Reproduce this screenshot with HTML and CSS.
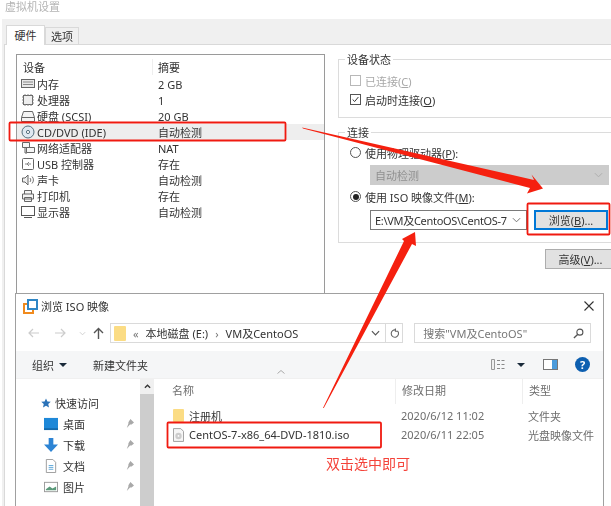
FILE: index.html
```html
<!DOCTYPE html>
<html lang="zh">
<head>
<meta charset="utf-8">
<title>虚拟机设置</title>
<link rel="stylesheet" href="styles.css">
</head>
<body>
<div class="stage">
  <div class="title">虚拟机设置</div>
  <div class="window">
    <div class="tabs"><span class="tab active">硬件</span><span class="tab">选项</span></div>
    <div class="panel">
      <div class="list">
        <div class="row head"><span class="c1 plain">设备</span><span class="c2">摘要</span></div>
        <div class="row"><span class="c1"><svg class="ic" viewBox="0 0 14 14"><rect x=".5" y="2.5" width="13" height="8" fill="#e8e8e8" stroke="#666"/><path d="M2 5h10M2 7.5h10" stroke="#888"/></svg>内存</span><span class="c2">2 GB</span></div>
        <div class="row"><span class="c1"><svg class="ic" viewBox="0 0 14 14"><rect x="2.5" y="2.5" width="9" height="9" fill="#eee" stroke="#666"/><path d="M4 1v12M7 1v12M10 1v12M1 4h12M1 7h12M1 10h12" stroke="#888" stroke-dasharray="1.5 8.5 2 0"/></svg>处理器</span><span class="c2">1</span></div>
        <div class="row"><span class="c1"><svg class="ic" viewBox="0 0 14 14"><path d="M.5 12.5v-4l2-6h9l2 6v4zM.5 8.500h13" fill="#f4f4f4" stroke="#666"/></svg>硬盘 (SCSI)</span><span class="c2">20 GB</span></div>
        <div class="row sel"><span class="c1"><svg class="ic" viewBox="0 0 14 14"><circle cx="7" cy="7" r="6" fill="#dfe9f2" stroke="#55707f"/><circle cx="7" cy="7" r="1.6" fill="#fff" stroke="#55707f"/></svg>CD/DVD (IDE)</span><span class="c2">自动检测</span></div>
        <div class="row"><span class="c1"><svg class="ic" viewBox="0 0 14 14"><path d="M1.500 1.500h7v5h-7zM5.500 6.500h8v5h-8zM4 7v5h2" fill="#f5f5f5" stroke="#666"/></svg>网络适配器</span><span class="c2">NAT</span></div>
        <div class="row"><span class="c1"><svg class="ic" viewBox="0 0 14 14"><rect x="1.500" y="1.500" width="11" height="11" rx="1" fill="#fff" stroke="#666"/><path d="M4 7h6M6 7l2-2M6 7l2 2" stroke="#888" fill="none"/></svg>USB 控制器</span><span class="c2">存在</span></div>
        <div class="row"><span class="c1"><svg class="ic" viewBox="0 0 14 14"><path d="M1.500 5h2.500l3-3v10l-3-3H1.500z" fill="#eee" stroke="#666"/><path d="M9 5a3 3 0 0 1 0 4M11 3.500a5 5 0 0 1 0 7" stroke="#777" fill="none"/></svg>声卡</span><span class="c2">自动检测</span></div>
        <div class="row"><span class="c1"><svg class="ic" viewBox="0 0 14 14"><path d="M3.500 5V1.500h7V5M1.500 5h11v5h-11zM3.500 8.500h7v4h-7z" fill="#f4f4f4" stroke="#666"/></svg>打印机</span><span class="c2">存在</span></div>
        <div class="row"><span class="c1"><svg class="ic" viewBox="0 0 14 14"><rect x=".5" y="1.500" width="13" height="9" fill="#fff" stroke="#555"/><path d="M3 12.500h8" stroke="#555"/></svg>显示器</span><span class="c2">自动检测</span></div>
      </div>
      <div class="side">
        <fieldset class="group status">
          <legend>设备状态</legend>
          <label class="opt off"><i class="check"></i><span>已连接(<u>C</u>)</span></label>
          <label class="opt"><i class="check on"><svg viewBox="0 0 11 11"><path d="M2 5.500l2.500 2.500 4.500-5.500" fill="none" stroke="#333" stroke-width="1.200"/></svg></i><span>启动时连接(<u>O</u>)</span></label>
        </fieldset>
        <fieldset class="group conn">
          <legend>连接</legend>
          <label class="opt"><i class="radio"></i><span>使用物理驱动器(<u>P</u>):</span></label>
          <div class="combo off"><span>自动检测</span><svg class="chev" viewBox="0 0 10 6"><path d="M1 1l4 4 4-4" fill="none" stroke="#aaa"/></svg></div>
          <label class="opt iso"><i class="radio on"></i><span>使用 ISO 映像文件(<u>M</u>):</span></label>
          <div class="pick">
            <div class="combo path"><span>E:\VM及CentoOS\CentOS-7</span><svg class="chev" viewBox="0 0 10 6"><path d="M1 1l4 4 4-4" fill="none" stroke="#666"/></svg></div>
            <button class="btn browse">浏览(<u>B</u>)...</button>
          </div>
        </fieldset>
        <div class="advanced"><button class="btn">高级(<u>V</u>)...</button></div>
      </div>
    </div>
  </div>

  <section class="dialog">
    <div class="dtitle">
      <svg class="logo" viewBox="0 0 15 15"><rect x="1" y="5" width="9" height="9" fill="none" stroke="#f08a1d" stroke-width="2"/><rect x="5" y="1" width="9" height="9" fill="#fff" stroke="#2f86c5" stroke-width="2"/></svg>
      <span class="dname">浏览 ISO 映像</span>
      <svg class="close" viewBox="0 0 10 10"><path d="M.5.5l9 9M9.500.5l-9 9" stroke="#333" stroke-width="1.100"/></svg>
    </div>
    <div class="nav">
      <svg class="arrow" viewBox="0 0 12 10"><path d="M11 5H1M5 1L1 5l4 4" fill="none" stroke="#ccc" stroke-width="1.200"/></svg>
      <svg class="arrow" viewBox="0 0 12 10"><path d="M1 5h10M7 1l4 4-4 4" fill="none" stroke="#ccc" stroke-width="1.200"/></svg>
      <svg class="mini" viewBox="0 0 8 5"><path d="M1 1l3 3 3-3" fill="none" stroke="#ccc"/></svg>
      <svg class="up" viewBox="0 0 11 12"><path d="M5.500 12V1.500M1 6l4.500-4.500L10 6" fill="none" stroke="#555" stroke-width="1.400"/></svg>
      <div class="addr">
        <i class="folder"></i><span class="crumb dim">«</span><span class="crumb">本地磁盘 (E:)</span><span class="crumb dim">›</span><span class="crumb">VM及CentoOS</span>
        <svg class="addr-chev" viewBox="0 0 10 6"><path d="M1 1l4 4 4-4" fill="none" stroke="#555" stroke-width="1.300"/></svg>
        <span class="refresh"><svg viewBox="0 0 12 12"><path d="M9.500 3.500a4 4 0 1 1-2-1.300M7 .5v3h3" fill="none" stroke="#666" stroke-width="1.200"/></svg></span>
      </div>
      <div class="search"><span>搜索"VM及CentoOS"</span><svg viewBox="0 0 12 12"><circle cx="7.500" cy="4.500" r="3.300" fill="none" stroke="#555" stroke-width="1.200"/><path d="M5 7l-4 4" stroke="#555" stroke-width="1.500"/></svg></div>
    </div>
    <div class="tools">
      <span class="tool">组织<i class="caret"></i></span><span class="tool">新建文件夹</span>
      <span class="tool-icons">
        <svg class="views" viewBox="0 0 15 11"><path d="M.5.500h3v10h-3z" fill="#eee" stroke="#999"/><path d="M6 1.500h3M10.500 1.500h3M6 5.500h3M10.500 5.500h3M6 9.500h3M10.500 9.500h3" stroke="#888"/></svg>
        <i class="caret vcaret"></i>
        <svg class="pane" viewBox="0 0 15 11"><rect x=".5" y=".5" width="14" height="10" fill="#fff" stroke="#777"/><rect x="9" y="1" width="5" height="9" fill="#4a9bdb"/></svg>
        <span class="help">?</span>
      </span>
    </div>
    <div class="content">
      <aside class="tree">
        <div class="tree-list">
          <div class="tree-item quick"><svg class="t-ic star" viewBox="0 0 12 12"><path d="M6 .5l1.700 3.700 4 .4-3 2.700.9 4L6 9.300l-3.600 2 .9-4-3-2.700 4-.4z" fill="#2a72b8"/></svg>快速访问</div>
          <div class="tree-item"><svg class="t-ic" viewBox="0 0 15 13"><rect width="15" height="12" fill="#1e88d8"/><rect y="11" width="15" height="2" fill="#156aac"/></svg>桌面<i class="pin"></i></div>
          <div class="tree-item"><svg class="t-ic" viewBox="0 0 15 15"><path d="M5 0h5v7h5l-7.500 8L0 7h5z" fill="#2d84d4"/></svg>下载<i class="pin"></i></div>
          <div class="tree-item"><svg class="t-ic" viewBox="0 0 15 15"><path d="M2.500.5h7l3 3v11h-10z" fill="#fff" stroke="#999"/><path d="M5 7h5M5 9h5M5 11h5" stroke="#5aa6d8"/></svg>文档<i class="pin"></i></div>
          <div class="tree-item"><svg class="t-ic" viewBox="0 0 15 13"><rect x=".5" y="1.500" width="14" height="10" fill="#fff" stroke="#999"/><path d="M2 9l4-3 3 2 4-2v4H2z" fill="#5b9a7a"/></svg>图片<i class="pin"></i></div>
        </div>
        <div class="scroll"><span class="sup"><svg viewBox="0 0 8 5"><path d="M1 4l3-3 3 3" fill="none" stroke="#333" stroke-width="1.500"/></svg></span><span class="thumb"></span></div>
      </aside>
      <div class="files">
        <div class="fhead">
          <span class="fc name">名称<svg class="sort" viewBox="0 0 8 4"><path d="M.5 3.500L4 .5l3.500 3" fill="none" stroke="#aaa"/></svg></span><span class="fc date">修改日期</span><span class="fc type">类型</span>
        </div>
        <div class="frow"><span class="fc name strong"><i class="folder small"></i>注册机</span><span class="fc date">2020/6/12 11:02</span><span class="fc type">文件夹</span></div>
        <div class="frow"><span class="fc name strong"><svg class="disc" viewBox="0 0 12 15"><path d="M.5.500h8l3 3v11H.5z" fill="#f6f6f6" stroke="#999"/><circle cx="6" cy="8.500" r="3.500" fill="#ccc"/><circle cx="6" cy="8.500" r="1" fill="#fff"/></svg>CentOS-7-x86_64-DVD-1810.iso</span><span class="fc date">2020/6/11 22:05</span><span class="fc type">光盘映像文件</span></div>
        <p class="note">双击选中即可</p>
      </div>
    </div>
  </section>

  <svg class="marks" viewBox="0 0 611 506">
    <rect class="box" x="9.500" y="122.500" width="276" height="18" rx="1"/>
    <rect class="box" x="527.500" y="203.500" width="82" height="31" rx="1"/>
    <rect class="box" x="167.500" y="422.500" width="213.500" height="25" rx="1"/>
    <path class="arr" d="M302 127.500L534 180L531.500 174.500L543 188.500L527 193.500L530 188L303 128.500Z"/>
    <path class="arr" d="M323 408L404 241L402 239L415 232L416 246L412 244L323.800 408Z"/>
  </svg>
</div>
</body>
</html>
```

FILE: styles.css
```css
* { box-sizing: border-box; }
html, body { margin: 0; background: #fff; }
body { font-family: "Noto Sans", "Noto Sans CJK SC", sans-serif; font-size: 11px; color: #333; }
button { font: inherit; color: inherit; padding: 0; }
i { display: block; }
u { text-decoration: underline; }
svg { display: block; flex: none; }

.stage { position: relative; width: 611px; height: 506px; overflow: hidden; filter: blur(.4px); }
.title { height: 19px; padding: 0 0 0 5px; font-size: 11px; line-height: 13px; color: #b4b4b4; }

.window { height: 487px; margin-left: 2px; background: #f0f0f0; padding: 6px 0 0 1px; }
.tabs { display: flex; align-items: flex-end; height: 19px; padding-left: 3px; }
.tab { display: block; width: 34px; height: 17px; line-height: 17px; text-align: center; background: #f0f0f0; border: 1px solid #d9d9d9; border-bottom: 0; font-size: 11px; }
.tab.active { width: 39px; height: 20px; line-height: 19px; background: #fff; border-color: #d9d9d9; position: relative; z-index: 1; margin-bottom: -1px; }
.panel { display: flex; align-items: flex-start; gap: 13px; height: 462px; margin-left: 1px; background: #fff; border-top: 1px solid #d9d9d9; border-left: 1px solid #d9d9d9; padding: 9px 0 0 11px; }

.list { width: 309px; height: 240px; background: #fff; border: 1px solid #9a9a9a; padding-top: 3px; flex: none; }
.row { display: flex; align-items: center; height: 15.950px; white-space: nowrap; font-size: 11px; }
.row.head { height: 18.500px; padding-bottom: 1px; }
.row.sel { background: #eee; }
.c1 { display: flex; align-items: center; gap: 2px; width: 141px; padding-left: 4px; }
.c1.plain { padding-left: 6px; }
.c2 { padding-left: 0; }
.head .c2 { border-left: 1px solid #eee; padding-left: 5px; margin-left: -6px; }
.ic { width: 14px; height: 14px; }

.side { flex: 1; min-width: 0; }
.group { margin: 0; width: 291px; border: 1px solid #dcdcdc; border-right: 0; padding: 0 0 0 11px; min-width: 0; }
.group legend { margin-left: -5px; padding: 0 2px; font-size: 11px; line-height: 13px; }
.status { height: 65px; margin-top: -1px; padding-top: 5px; }
.conn { height: 117px; margin-top: 8px; padding-top: 4px; }
.opt { display: flex; align-items: center; gap: 4px; height: 19px; font-size: 11px; white-space: nowrap; }
.opt.off { color: #a8a8a8; }
.check { width: 11px; height: 11px; border: 1px solid #b8b8b8; background: #fff; }
.check.on { border-color: #555; }
.check svg { width: 9px; height: 9px; }
.radio { position: relative; width: 11px; height: 11px; border: 1px solid #555; border-radius: 50%; background: #fff; }
.radio.on::after { content: ""; position: absolute; inset: 1.500px; border-radius: 50%; background: #222; }
.combo { display: flex; align-items: center; justify-content: space-between; height: 20px; border: 1px solid #aaa; background: #fff; padding: 0 5px 0 4px; font-size: 11px; white-space: nowrap; }
.combo.off { width: 239px; margin: 3px 0 2px 20px; background: #ccc; border-color: #ccc; color: #909090; }
.combo.path { width: 157px; border-color: #7a7a7a; letter-spacing: -.3px; }
.chev { width: 9px; height: 6px; }
.pick { display: flex; align-items: center; gap: 7px; margin: 4px 0 0 20px; }
.btn { height: 20px; background: #e1e1e1; border: 1px solid #adadad; font-size: 11px; white-space: nowrap; }
.browse { width: 74px; border: 2px solid #0078d7; }
.advanced { margin: 6px 0 0 207px; }
.advanced .btn { width: 70px; border-right: 0; }

.dialog { position: absolute; left: 15px; top: 293px; width: 589px; height: 220px; background: #fff; border: 1px solid #a0a0a0; }
.dtitle { display: flex; align-items: center; height: 24px; padding: 0 9px 0 7px; gap: 3px; }
.logo { width: 15px; height: 15px; }
.dname { font-size: 11px; color: #333; }
.close { width: 10px; height: 10px; margin-left: auto; }

.nav { display: flex; align-items: center; height: 33px; padding: 0 12px 3px 12px; }
.arrow { width: 12px; height: 10px; margin-right: 14px; }
.mini { width: 7px; height: 5px; margin: 0 7px 0 -1px; }
.up { width: 11px; height: 12px; margin-right: 6px; }
.addr { display: flex; align-items: center; width: 294px; height: 20px; border: 1px solid #dadada; padding-left: 3px; font-size: 11px; white-space: nowrap; }
.folder { width: 12px; height: 15px; background: #fbdc84; border-radius: 1px; }
.folder.small { height: 13px; width: 11px; margin-right: 5px; }
.crumb { margin-left: 7px; }
.crumb.dim { color: #777; }
.addr-chev { width: 9px; height: 6px; margin-left: auto; margin-right: 5px; }
.refresh { display: flex; align-items: center; justify-content: center; width: 17px; height: 18px; border-left: 1px solid #dadada; }
.refresh svg { width: 11px; height: 11px; }
.search { display: flex; align-items: center; justify-content: space-between; width: 177px; height: 20px; margin-left: 11px; border: 1px solid #dadada; padding: 0 6px 0 8px; color: #777; font-size: 11px; white-space: nowrap; }
.search svg { width: 11px; height: 11px; }

.tools { display: flex; align-items: center; gap: 26px; height: 28px; padding: 0 13px 0 16px; background: #f5f6f7; border-bottom: 1px solid #f0f0f0; font-size: 11px; }
.tool { display: flex; align-items: center; }
.caret { width: 0; height: 0; margin-left: 5px; border: 4px solid transparent; border-top: 4px solid #1a2a3a; border-bottom: 0; }
.tool-icons { display: flex; align-items: center; margin-left: auto; }
.views { width: 15px; height: 11px; margin-right: 6px; }
.vcaret { margin: 0 18px 0 5px; }
.pane { width: 15px; height: 11px; margin-right: 17px; }
.help { width: 15px; height: 15px; border-radius: 50%; background: #0d5fb0; color: #fff; font-size: 11px; font-weight: 700; line-height: 15px; text-align: center; }

.content { display: flex; }
.tree { display: flex; width: 138px; height: 130px; }
.tree-list { width: 124px; padding: 13px 0 0 0; font-size: 11px; }
.tree-item { display: flex; align-items: center; gap: 5px; height: 21px; padding-left: 28px; position: relative; }
.tree-item.quick { padding-left: 25px; gap: 4px; }
.t-ic { width: 14px; height: 14px; }
.star { width: 10px; height: 10px; }
.pin { position: absolute; left: 110px; top: 6px; width: 8px; height: 9px; background: #a9a9a9; clip-path: polygon(55% 0, 100% 40%, 70% 60%, 50% 60%, 10% 100%, 30% 50%, 30% 35%); }
.scroll { display: flex; flex-direction: column; width: 14px; background: #f0f0f0; }
.sup { display: flex; align-items: center; justify-content: center; height: 15px; }
.sup svg { width: 7px; height: 5px; }
.thumb { flex: 1; background: #cdcdcd; }

.files { flex: 1; min-width: 0; font-size: 11px; color: #6d6d6d; }
.fhead { display: flex; height: 25px; padding-left: 18px; margin-bottom: 2px; }
.frow { display: flex; align-items: center; height: 19px; padding-left: 19px; }
.fc { display: flex; align-items: center; white-space: nowrap; }
.fhead .fc { padding-bottom: 3px; }
.name { position: relative; width: 229px; }
.frow .name { width: 228px; }
.date { width: 127px; }
.fhead .date { border-left: 1px solid #eee; padding-left: 6px; margin-left: -6px; width: 133px; }
.fhead .type { border-left: 1px solid #eee; padding-left: 6px; margin-left: -6px; }
.sort { position: absolute; left: 105px; top: -9px; width: 8px; height: 4px; }
.strong { color: #333; }
.disc { width: 11px; height: 14px; margin-right: 5px; }
.note { margin: 11px 0 0 172px; font-size: 14px; line-height: 18px; color: #f4433a; }

.marks { position: absolute; left: 0; top: 0; width: 611px; height: 506px; pointer-events: none; }
.box { fill: none; stroke: #f01a10; stroke-width: 1.800; }
.arr { fill: #f5200f; }
```
